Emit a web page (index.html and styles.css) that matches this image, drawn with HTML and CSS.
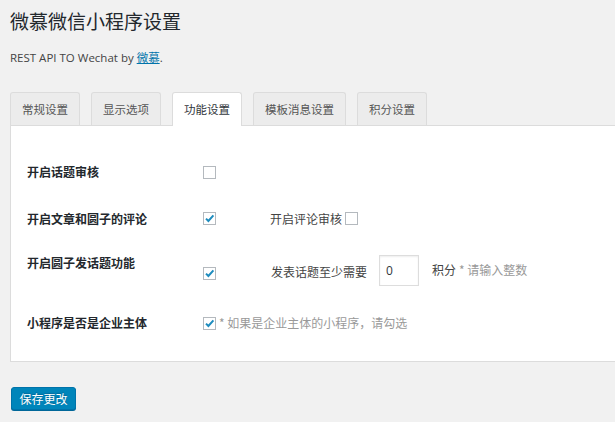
FILE: index.html
```html
<!DOCTYPE html>
<html lang="zh-CN">
<head>
<meta charset="utf-8">
<title>微慕微信小程序设置</title>
<link rel="stylesheet" href="styles.css">
</head>
<body>
<div class="wrap">
  <h1 class="title">微慕微信小程序设置</h1>
  <p class="sub">REST API TO Wechat by <a href="#" class="link">微慕</a>.</p>
  <div class="tabs">
    <span class="tab">常规设置</span>
    <span class="tab">显示选项</span>
    <span class="tab active">功能设置</span>
    <span class="tab">模板消息设置</span>
    <span class="tab">积分设置</span>
  </div>
  <div class="panel">
    <div class="row r1">
      <div class="label">开启话题审核</div>
      <div class="field"><span class="cb"></span></div>
    </div>
    <div class="row r2">
      <div class="label">开启文章和圆子的评论</div>
      <div class="field">
        <span class="cb"><svg viewBox="0 0 13 13" width="13" height="13"><path d="M3 6.6 L5.4 9 L10.4 3.4" fill="none" stroke="#1e8cbe" stroke-width="2"/></svg></span>
        <span class="txt ml54">开启评论审核</span>
        <span class="cb ml3"></span>
      </div>
    </div>
    <div class="row r3">
      <div class="label up">开启圆子发话题功能</div>
      <div class="field">
        <span class="cb down"><svg viewBox="0 0 13 13" width="13" height="13"><path d="M3 6.6 L5.4 9 L10.4 3.4" fill="none" stroke="#1e8cbe" stroke-width="2"/></svg></span>
        <span class="txt ml55">发表话题至少需要</span>
        <span class="input">0</span>
        <span class="txt">积分</span>
        <span class="hint">* 请输入整数</span>
      </div>
    </div>
    <div class="row r4">
      <div class="label">小程序是否是企业主体</div>
      <div class="field">
        <span class="cb"><svg viewBox="0 0 13 13" width="13" height="13"><path d="M3 6.6 L5.4 9 L10.4 3.4" fill="none" stroke="#1e8cbe" stroke-width="2"/></svg></span>
        <span class="hint ml3">* 如果是企业主体的小程序，请勾选</span>
      </div>
    </div>
  </div>
  <button class="btn" type="button">保存更改</button>
</div>
</body>
</html>
```
FILE: styles.css
```css
html, body {
  margin: 0;
  padding: 0;
  background: #f1f1f1;
}
body {
  font-family: "Open Sans", "Noto Sans CJK SC", sans-serif;
  color: #444;
  font-size: 12px;
}
.wrap {
  padding-left: 10px;
  overflow: hidden;
  height: 422px;
  box-sizing: border-box;
}
.title {
  margin: 9px 0 0 0;
  font-family: "Noto Sans CJK SC", sans-serif;
  font-size: 19px;
  font-weight: 400;
  line-height: 24px;
  color: #23282d;
}
.sub {
  margin: 16px 0 0 0;
  font-size: 11.5px;
  line-height: 16px;
  color: #444;
}
.link {
  color: #0073aa;
  text-decoration: underline;
  font-family: "Noto Sans CJK SC", sans-serif;
}
.tabs {
  display: flex;
  gap: 11px;
  margin-top: 26px;
  position: relative;
  z-index: 2;
}
.tab {
  height: 33px;
  box-sizing: border-box;
  padding: 0 11px;
  border: 1px solid #dcdcdc;
  border-bottom: none;
  border-radius: 3px 3px 0 0;
  background: #ececec;
  font-family: "Noto Sans CJK SC", sans-serif;
  font-size: 11.5px;
  line-height: 32px;
  color: #555;
}
.tab.active {
  background: #fff;
  color: #32373c;
  height: 34px;
  margin-bottom: -1px;
}
.panel {
  background: #fff;
  border: 1px solid #dcdcdc;
  border-right: none;
  padding: 23px 0 13px 16px;
  position: relative;
  z-index: 1;
}
.row {
  display: grid;
  grid-template-columns: 176px 1fr;
  align-items: center;
}
.r1 { height: 46px; }
.r2 { height: 47px; }
.r3 { height: 56px; }
.r4 { height: 50px; }
.label {
  font-family: "Noto Sans CJK SC", sans-serif;
  font-weight: 700;
  font-size: 12px;
  line-height: 16px;
  color: #23282d;
}
.label.up { margin-bottom: 14px; }
.field {
  display: flex;
  align-items: center;
  font-family: "Noto Sans CJK SC", sans-serif;
  font-size: 12px;
  line-height: 16px;
}
.cb {
  width: 13px;
  height: 13px;
  box-sizing: border-box;
  border: 1px solid #b4b9be;
  background: #fff;
  position: relative;
  flex: none;
}
.cb svg {
  position: absolute;
  left: -1px;
  top: -1px;
}
.cb.down { margin-top: 6px; }
.txt { color: #444; }
.ml54 { margin-left: 54px; }
.ml55 { margin-left: 55px; margin-top: 3px; }
.ml3 { margin-left: 3px; }
.input {
  width: 40px;
  height: 31px;
  box-sizing: border-box;
  border: 1px solid #ddd;
  box-shadow: inset 0 1px 2px rgba(0,0,0,0.07);
  margin: 0 13px 0 12px;
  padding-left: 6px;
  line-height: 29px;
  font-family: "Open Sans", sans-serif;
  font-size: 12px;
  color: #32373c;
}
.hint {
  color: #999;
  margin-left: 3px;
}
.btn {
  display: block;
  margin: 25px 0 0 1px;
  height: 23px;
  width: 65px;
  padding: 0;
  background: #0085ba;
  border: 1px solid #0073aa;
  border-radius: 3px;
  box-shadow: 0 1px 0 #006799;
  color: #fff;
  font-family: "Noto Sans CJK SC", sans-serif;
  font-size: 12px;
  line-height: 20px;
  text-shadow: 0 -1px 1px #006799;
}
```
